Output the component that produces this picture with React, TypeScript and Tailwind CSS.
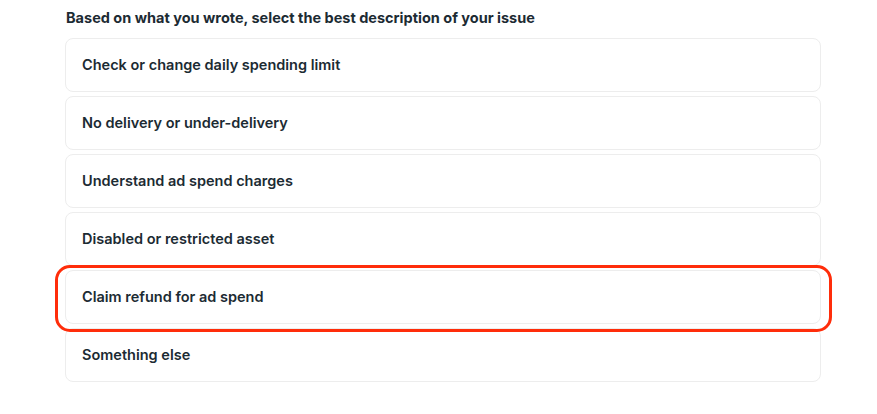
import React from "react";

const options = [
  "Check or change daily spending limit",
  "No delivery or under-delivery",
  "Understand ad spend charges",
  "Disabled or restricted asset",
  "Claim refund for ad spend",
  "Something else",
];

const highlighted = "Claim refund for ad spend";

const App = () => {
  return (
    <div
      className="min-h-[414px] w-[877px] bg-white pl-[65px] pt-[9px] text-[#1c2b33]"
      style={{ fontFamily: "Inter, 'Noto Sans', sans-serif" }}
    >
      <div className="mb-[11px] pl-[1px] text-[14.5px] font-bold leading-[18px]">
        Based on what you wrote, select the best description of your issue
      </div>
      <div className="flex w-[756px] flex-col gap-[4px]">
        {options.map((label) => (
          <div key={label} className={label === highlighted ? "relative z-10" : "relative"}>
            <div className="flex h-[54px] items-center rounded-[8px] border border-[#ededed] bg-white px-[16px] text-[14.5px] font-semibold">
              {label}
            </div>
            {label === highlighted && (
              <div className="pointer-events-none absolute -bottom-[8px] -left-[10px] -right-[11px] -top-[5px] rounded-[15px] border-[3px] border-[#ff2d0a]" />
            )}
          </div>
        ))}
      </div>
    </div>
  );
};

export default App;
